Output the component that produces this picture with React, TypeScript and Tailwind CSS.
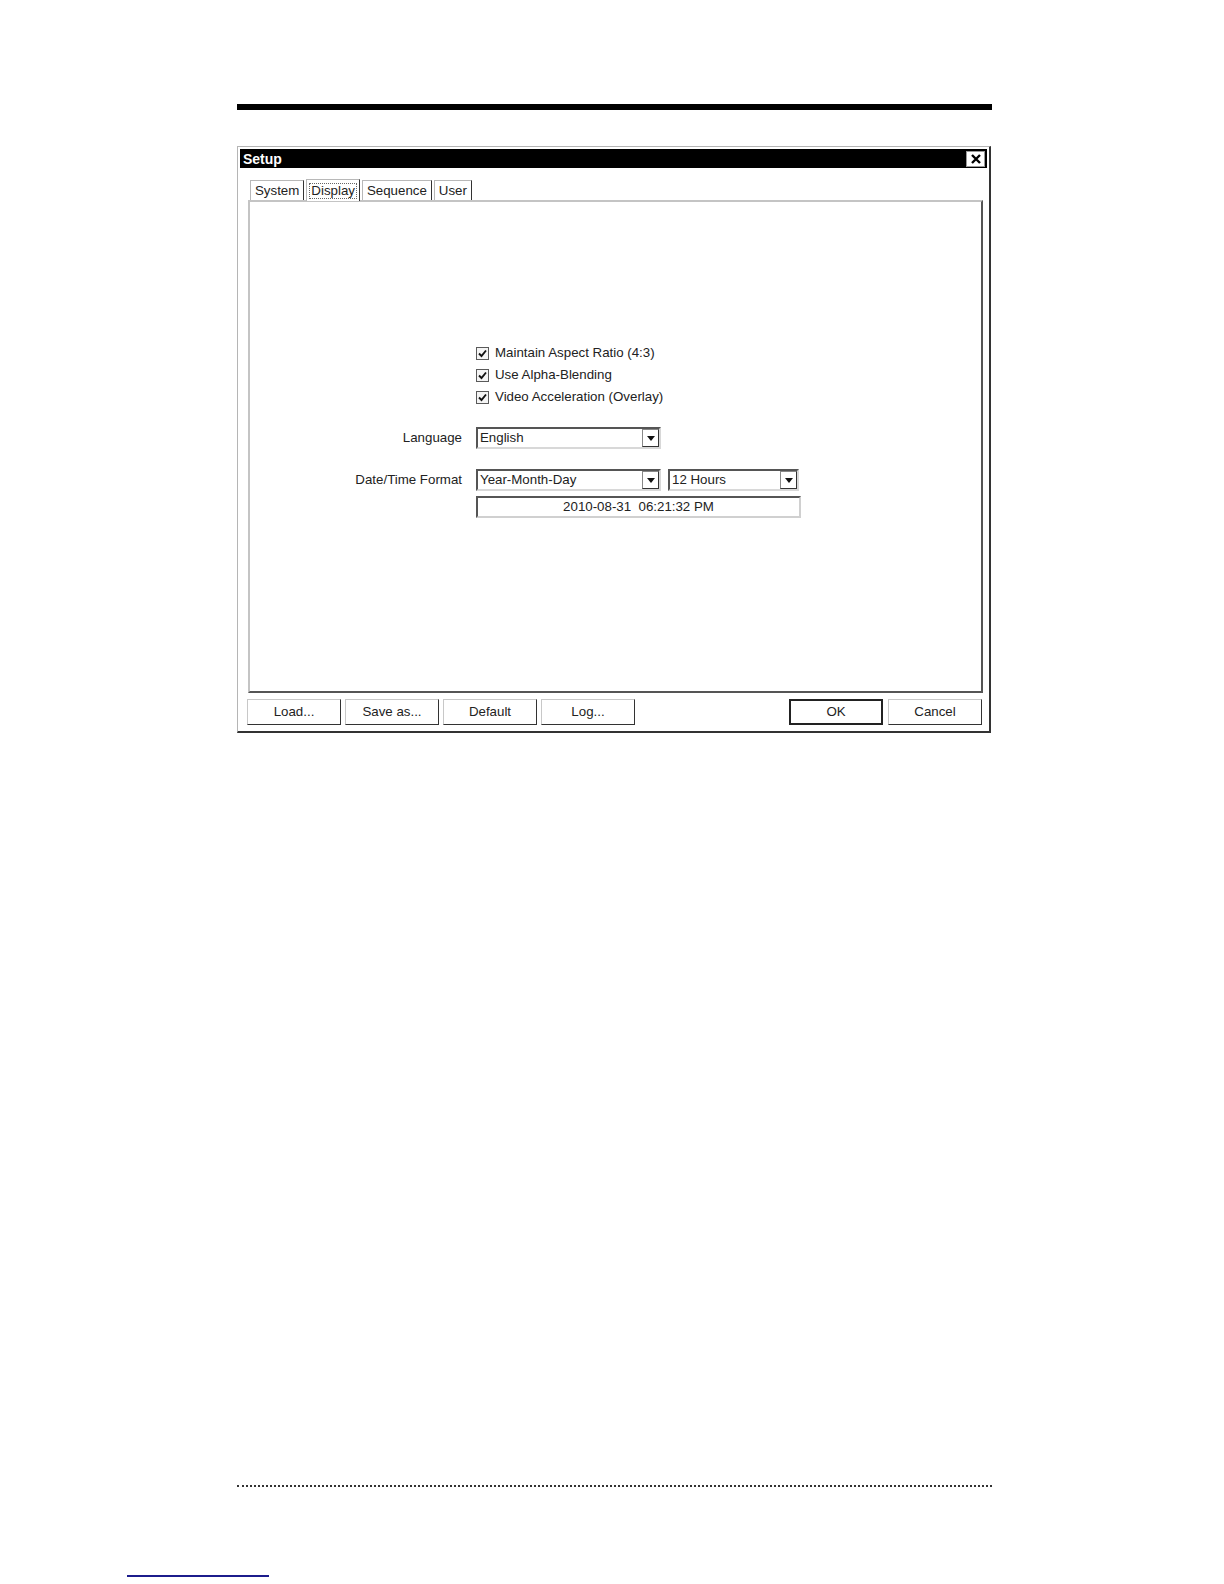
import React from 'react';

const font = { fontFamily: '"Liberation Sans", Arial, sans-serif' };

function Check({ label }: { label: string }) {
    return (
        <div className="flex items-center h-[22px] gap-[6px]">
            <div className="w-[13px] h-[13px] border border-[#5a5a5a] bg-[#f4f4f4] flex items-center justify-center">
                <svg width="9" height="9" viewBox="0 0 9 9">
                    <path d="M1 4.5 L3.5 7 L8 1.5" fill="none" stroke="#111" strokeWidth="1.9" />
                </svg>
            </div>
            <span>{label}</span>
        </div>
    );
}

function Select({ value, width }: { value: string; width: string }) {
    return (
        <div className={`${width} h-[22px] flex items-center border-2 border-t-[#555] border-l-[#555] border-r-[#d8d8d8] border-b-[#d8d8d8] bg-white`}>
            <span className="flex-1 pl-[2px] leading-none">{value}</span>
            <div className="w-[17px] h-[18px] flex items-center justify-center border border-[#888] border-r-[#333] border-b-[#333] bg-white">
                <svg width="8" height="5" viewBox="0 0 8 5">
                    <path d="M0 0 H8 L4 5 Z" fill="#111" />
                </svg>
            </div>
        </div>
    );
}

function Btn({ label, def }: { label: string; def?: boolean }) {
    return (
        <div
            className={`w-[94px] h-[26px] flex items-center justify-center bg-white ${
                def
                    ? 'border-2 border-[#222]'
                    : 'border border-t-[#c8c8c8] border-l-[#c8c8c8] border-r-[#333] border-b-[#333]'
            }`}
        >
            {label}
        </div>
    );
}

function Tab({ label, active }: { label: string; active?: boolean }) {
    return (
        <div
            className={`flex items-center border-t border-l border-r border-t-[#b8b8b8] border-l-[#b8b8b8] border-r-[#333] bg-white ${
                active ? 'h-[22px] px-[2px] -mb-[1px] relative z-10' : 'h-[20px] px-[4px]'
            }`}
        >
            {active ? (
                <span className="border border-dotted border-[#666] px-[1px] leading-[14px]">{label}</span>
            ) : (
                <span className="leading-none">{label}</span>
            )}
        </div>
    );
}

export default function App() {
    return (
        <div className="w-full h-[1584px] overflow-hidden bg-white text-[13.3px] text-[#222]" style={font}>
            <div className="pt-[104px] pl-[237px]">
                <div className="w-[755px] h-[6px] bg-black" />

                {/* Setup dialog */}
                <div className="mt-[36px] w-[754px] h-[587px] border border-[#b5b5b5] border-r-2 border-b-2 border-r-[#333] border-b-[#333] bg-white p-[2px] flex flex-col">
                    <div className="h-[19px] bg-black flex items-center justify-between pl-[3px] pr-[2px]">
                        <span className="text-white font-bold text-[14px] leading-none">Setup</span>
                        <div className="w-[19px] h-[16px] bg-white border border-[#999] flex items-center justify-center">
                            <svg width="10" height="10" viewBox="0 0 10 10">
                                <path d="M1 1 L9 9 M9 1 L1 9" stroke="#000" strokeWidth="2.4" />
                            </svg>
                        </div>
                    </div>

                    <div className="pl-[8px] pt-[10px] flex flex-col">
                        <div className="flex items-end pl-[2px] gap-[2px] h-[22px]">
                            <Tab label="System" />
                            <Tab label="Display" active />
                            <Tab label="Sequence" />
                            <Tab label="User" />
                        </div>

                        {/* Tab panel */}
                        <div className="w-[735px] h-[493px] border-2 border-t-[#c4c4c4] border-l-[#c4c4c4] border-r-[#555] border-b-[#555] bg-white pt-[140px]">
                            <div className="grid grid-cols-[212px_1fr] gap-x-[14px]">
                                <div />
                                <div className="flex flex-col">
                                    <Check label="Maintain Aspect Ratio (4:3)" />
                                    <Check label="Use Alpha-Blending" />
                                    <Check label="Video Acceleration (Overlay)" />
                                </div>

                                <div className="mt-[19px] h-[22px] flex items-center justify-end">Language</div>
                                <div className="mt-[19px]">
                                    <Select value="English" width="w-[185px]" />
                                </div>

                                <div className="mt-[20px] h-[22px] flex items-center justify-end">Date/Time Format</div>
                                <div className="mt-[20px] flex flex-col gap-[5px]">
                                    <div className="flex gap-[7px]">
                                        <Select value="Year-Month-Day" width="w-[185px]" />
                                        <Select value="12 Hours" width="w-[131px]" />
                                    </div>
                                    <div className="w-[325px] h-[22px] border-2 border-t-[#555] border-l-[#555] border-r-[#d0d0d0] border-b-[#d0d0d0] flex items-center justify-center">
                                        2010-08-31&nbsp;&nbsp;06:21:32 PM
                                    </div>
                                </div>
                            </div>
                        </div>

                        <div className="mt-[6px] -ml-[1px] w-[735px] flex justify-between">
                            <div className="flex gap-[4px]">
                                <Btn label="Load..." />
                                <Btn label="Save as..." />
                                <Btn label="Default" />
                                <Btn label="Log..." />
                            </div>
                            <div className="flex gap-[5px]">
                                <Btn label="OK" def />
                                <Btn label="Cancel" />
                            </div>
                        </div>
                    </div>
                </div>

                <div className="mt-[752px] w-[755px] border-t-2 border-dotted border-[#333]" />
            </div>

            <div className="mt-[88px] ml-[127px] w-[142px] h-[2px] bg-[#1c1c8c]" />
        </div>
    );
}
